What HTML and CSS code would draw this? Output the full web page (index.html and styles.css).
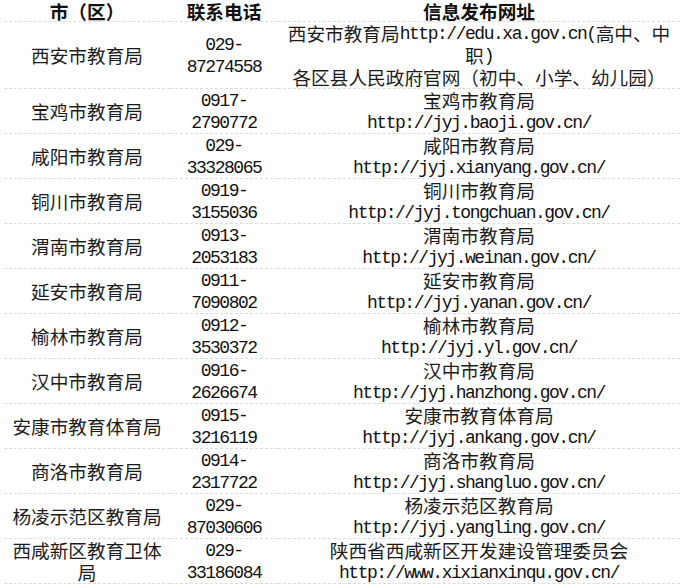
FILE: index.html
```html
<!DOCTYPE html>
<html lang="zh-CN">
<head>
<meta charset="utf-8">
<title>陕西省各市（区）教育局联系方式</title>
<link rel="stylesheet" href="styles.css">
</head>
<body>
<table class="info">
  <colgroup>
    <col class="c1"><col class="c2"><col class="c3">
  </colgroup>
  <thead>
    <tr><th>市（区）</th><th>联系电话</th><th>信息发布网址</th></tr>
  </thead>
  <tbody>
    <tr>
      <td>西安市教育局</td>
      <td><span class="en">029-<wbr>87274558</span></td>
      <td>西安市教育局<span class="en">http://edu.xa.gov.cn(</span>高中、中职<span class="en">)</span><br>各区县人民政府官网（初中、小学、幼儿园）</td>
    </tr>
    <tr>
      <td>宝鸡市教育局</td>
      <td><span class="en">0917-<wbr>2790772</span></td>
      <td>宝鸡市教育局<br><span class="en">http://jyj.baoji.gov.cn/</span></td>
    </tr>
    <tr>
      <td>咸阳市教育局</td>
      <td><span class="en">029-<wbr>33328065</span></td>
      <td>咸阳市教育局<br><span class="en">http://jyj.xianyang.gov.cn/</span></td>
    </tr>
    <tr>
      <td>铜川市教育局</td>
      <td><span class="en">0919-<wbr>3155036</span></td>
      <td>铜川市教育局<br><span class="en">http://jyj.tongchuan.gov.cn/</span></td>
    </tr>
    <tr>
      <td>渭南市教育局</td>
      <td><span class="en">0913-<wbr>2053183</span></td>
      <td>渭南市教育局<br><span class="en">http://jyj.weinan.gov.cn/</span></td>
    </tr>
    <tr>
      <td>延安市教育局</td>
      <td><span class="en">0911-<wbr>7090802</span></td>
      <td>延安市教育局<br><span class="en">http://jyj.yanan.gov.cn/</span></td>
    </tr>
    <tr>
      <td>榆林市教育局</td>
      <td><span class="en">0912-<wbr>3530372</span></td>
      <td>榆林市教育局<br><span class="en">http://jyj.yl.gov.cn/</span></td>
    </tr>
    <tr>
      <td>汉中市教育局</td>
      <td><span class="en">0916-<wbr>2626674</span></td>
      <td>汉中市教育局<br><span class="en">http://jyj.hanzhong.gov.cn/</span></td>
    </tr>
    <tr>
      <td>安康市教育体育局</td>
      <td><span class="en">0915-<wbr>3216119</span></td>
      <td>安康市教育体育局<br><span class="en">http://jyj.ankang.gov.cn/</span></td>
    </tr>
    <tr>
      <td>商洛市教育局</td>
      <td><span class="en">0914-<wbr>2317722</span></td>
      <td>商洛市教育局<br><span class="en">http://jyj.shangluo.gov.cn/</span></td>
    </tr>
    <tr>
      <td>杨凌示范区教育局</td>
      <td><span class="en">029-<wbr>87030606</span></td>
      <td>杨凌示范区教育局<br><span class="en">http://jyj.yangling.gov.cn/</span></td>
    </tr>
    <tr>
      <td>西咸新区教育卫体局</td>
      <td><span class="en">029-<wbr>33186084</span></td>
      <td>陕西省西咸新区开发建设管理委员会<br><span class="en">http://www.xixianxinqu.gov.cn/</span></td>
    </tr>
  </tbody>
</table>
</body>
</html>
```

FILE: styles.css
```css
html, body {
  margin: 0;
  padding: 0;
  background: #ffffff;
}

body {
  font-family: "Noto Sans CJK SC", "Noto Sans", sans-serif;
  color: #1c1c1c;
}

.info {
  border-collapse: collapse;
  border-spacing: 0;
  table-layout: fixed;
  width: 676px;
  margin: 0 0 0 4px;
  font-size: 18.67px;
  line-height: 22px;
}

.c1 { width: 166px; }
.c2 { width: 108px; }
.c3 { width: 402px; }

.info th,
.info td {
  padding: 0;
  text-align: center;
  vertical-align: middle;
  border-bottom: 1px dashed #dcdcdc;
}

.info th {
  font-weight: 700;
  line-height: 21px;
  color: #111111;
}

.en {
  font-family: "Liberation Mono", "DejaVu Sans Mono", monospace;
  font-size: 18px;
  letter-spacing: -1.47px;
  line-height: 0;
  vertical-align: 2px;
  color: #111111;
}
```
